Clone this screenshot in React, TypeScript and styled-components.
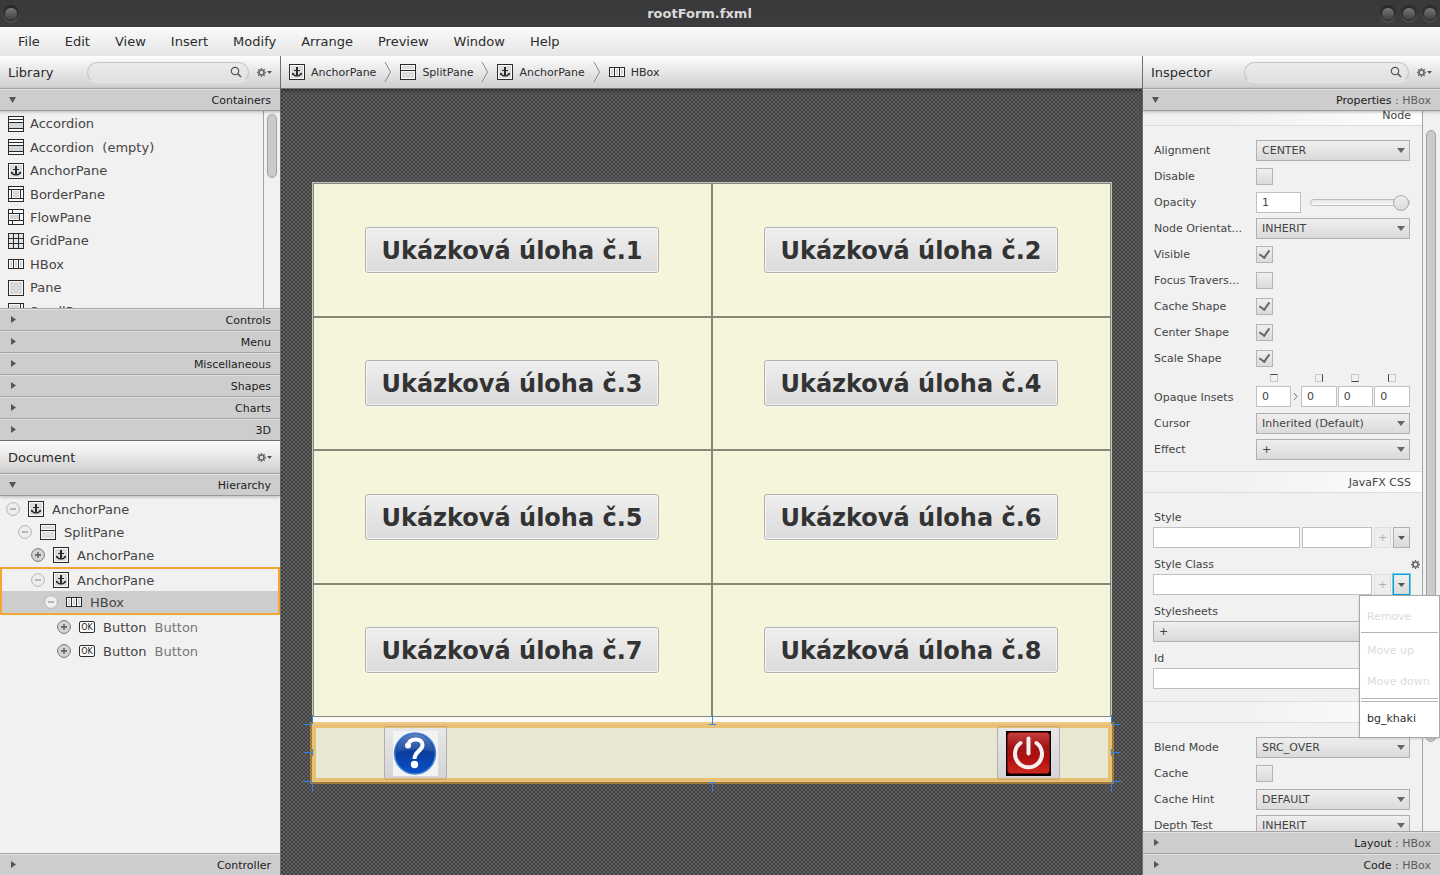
import React from "react";
import styled, { createGlobalStyle, css } from "styled-components";

const GlobalStyle = createGlobalStyle`
  * { box-sizing: border-box; }
  body { margin: 0; }
  body, button, input, select {
    font-family: "DejaVu Sans", Verdana, sans-serif;
    color: #444;
  }
  button { border: 0; background: none; padding: 0; margin: 0; }
  ul { list-style: none; margin: 0; padding: 0; }
`;

const line = "#a4a4a4";
const barFill = "linear-gradient(#fdfdfd, #cfcfcf)";
const controlFill = "linear-gradient(#efefef, #dadada)";

/* ---------- window frame ---------- */

const Window = styled.div`
  display: flex;
  flex-direction: column;
  height: 100vh;
  overflow: hidden;
  background: #f1f1f1;
  font-size: 13px;
`;

const TitleBar = styled.header`
  display: flex;
  align-items: center;
  gap: 3px;
  height: 27px;
  flex: none;
  padding: 0 1px 0 2px;
  background: linear-gradient(#39393b, #3c3c3e);
`;

const Title = styled.h1`
  flex: 1;
  margin: 0;
  text-align: center;
  font-size: 13px;
  font-weight: 700;
  color: #dadada;
`;

const WindowButton = styled.button`
  width: 18px;
  height: 18px;
  border-radius: 50%;
  background: linear-gradient(#262627, #505052);
  display: grid;
  place-items: center;
  &::before {
    content: "";
    width: 12px;
    height: 12px;
    border-radius: 50%;
    background: linear-gradient(#787878, #3e3e40);
    border: 1px solid #2c2c2d;
  }
`;

const MenuBar = styled.nav`
  display: flex;
  flex: none;
  height: 29px;
  padding-left: 5px;
  background: linear-gradient(#fafafa, #e6e6e6);
`;

const MenuButton = styled.button`
  padding: 0 12px 0 13px;
  font-size: 13px;
  color: #2c2c2c;
`;

const Body = styled.div`
  display: flex;
  flex: 1;
  min-height: 0;
`;

const Side = styled.aside<{ $right?: boolean }>`
  display: flex;
  flex-direction: column;
  flex: none;
  width: ${(p) => (p.$right ? "298px" : "281px")};
  border: 0 solid #6e6e6e;
  ${(p) => (p.$right ? "border-left-width: 1px;" : "border-right-width: 1px;")}
`;

const PanelBar = styled.div`
  display: flex;
  align-items: center;
  flex: none;
  height: 32px;
  padding: 0 8px;
  background: ${barFill};
`;

const PanelTitle = styled.h2`
  flex: 1;
  margin: 0;
  font-size: 13px;
  font-weight: 400;
  color: #2c2c2c;
`;

const SearchBox = styled.label<{ $width: number }>`
  display: flex;
  align-items: center;
  width: ${(p) => p.$width}px;
  height: 21px;
  margin-right: 8px;
  padding: 0 6px 0 10px;
  border: 1px solid #c4c4c4;
  border-bottom-color: #e8e8e8;
  border-radius: 11px;
  background: linear-gradient(#ececec, #dfdfdf);
  input {
    flex: 1;
    min-width: 0;
    border: 0;
    outline: 0;
    background: none;
    font-size: 11px;
  }
`;

const GearButton = styled.button`
  display: flex;
  align-items: center;
  gap: 1px;
`;

const SectionButton = styled.button<{ $open?: boolean }>`
  position: relative;
  z-index: 1;
  display: flex;
  align-items: center;
  flex: none;
  width: 100%;
  height: ${(p) => (p.$open ? 23 : 22)}px;
  padding: 1px 9px 0;
  border-top: 1px solid ${line};
  background: #cdcdcd;
  box-shadow: inset 0 1px #e2e2e2;
  font-size: 11px;
  color: #1c1c1c;
  ${(p) =>
    p.$open &&
    css`
      border-bottom: 1px solid #9a9a9a;
      box-shadow: inset 0 1px #e2e2e2, 0 1px 3px rgba(0, 0, 0, 0.25);
    `}
`;

const SectionName = styled.span`
  flex: 1;
  text-align: right;
  small {
    font-size: 11px;
    color: #5c5c5c;
  }
`;

/* ---------- library and hierarchy ---------- */

const LibraryArea = styled.div`
  display: flex;
  flex: none;
  height: 197px;
  overflow: hidden;
`;

const LibraryList = styled.ul`
  display: grid;
  flex: 1;
  height: 212px;
  grid-template-rows: repeat(9, 1fr);
  padding: 1px 0 0 8px;
`;

const LibraryItem = styled.li`
  display: flex;
  align-items: center;
  gap: 6px;
  white-space: pre;
`;

const ScrollTrack = styled.div<{ $top: number; $width: number }>`
  flex: none;
  width: ${(p) => p.$width}px;
  padding: ${(p) => p.$top}px 3px 0;
  border-left: 1px solid ${line};
`;

const ScrollThumb = styled.div<{ $length: string }>`
  width: 10px;
  height: ${(p) => p.$length};
  border: 1px solid #a2a2a2;
  border-radius: 5px;
  background: #cbcbcb;
`;

const DocumentPanel = styled.section`
  display: flex;
  flex-direction: column;
  flex: 1;
  min-height: 0;
  border-top: 1px solid #6e6e6e;
`;

const Tree = styled.ul`
  flex: 1;
  min-height: 0;
  overflow: hidden;
  padding-top: 1px;
`;

const TreeRow = styled.li<{ $indent: number; $short?: boolean; $selected?: boolean }>`
  display: flex;
  align-items: center;
  gap: 8px;
  height: ${(p) => (p.$short ? 22 : 24)}px;
  padding-left: ${(p) => p.$indent}px;
  background: ${(p) => (p.$selected ? "#cdcdcd" : "transparent")};
  em {
    font-style: normal;
    color: #777;
  }
`;

const DropTarget = styled.ul`
  border: 2px solid #f0a733;
`;

const Toggle = styled.button`
  display: flex;
`;

/* ---------- centre ---------- */

const Workspace = styled.main`
  display: flex;
  flex-direction: column;
  flex: 1;
  min-width: 0;
`;

const Crumbs = styled.nav`
  display: flex;
  align-items: center;
  flex: none;
  gap: 8px;
  height: 33px;
  padding-left: 8px;
  border-bottom: 1px solid #777;
  background: ${barFill};
`;

const Crumb = styled.a`
  display: flex;
  align-items: center;
  gap: 6px;
  font-size: 11px;
  color: #2c2c2c;
  text-decoration: none;
`;

const Canvas = styled.div`
  display: grid;
  place-items: center;
  flex: 1;
  min-height: 0;
  background: repeating-conic-gradient(#424242 0 25%, #606060 0 50%) 0 0 / 4px 4px;
  box-shadow: inset 0 3px 4px -2px rgba(0, 0, 0, 0.5);
`;

const Scene = styled.div`
  display: flex;
  flex-direction: column;
  width: 800px;
  height: 600px;
  border: 1px solid #c4c4c4;
  border-bottom: 0;
  background: #fafafa;
`;

const TaskGrid = styled.div`
  display: grid;
  flex: 1;
  grid-template: repeat(4, 1fr) / 1fr 1fr;
  margin-bottom: 7px;
`;

const TaskCell = styled.div`
  display: grid;
  place-items: center;
  border: 1px solid #888878;
  background: #f5f5dc;
`;

const TaskButton = styled.button`
  height: 46px;
  padding: 2px 15px 0;
  border: 1px solid #b2b2b2;
  border-radius: 3px;
  background: ${controlFill};
  box-shadow: inset 0 0 0 1px #f4f4f4, 0 1px #fbfbf0;
  font-size: 24px;
  font-weight: 700;
  color: #333;
`;

const BottomBox = styled.div`
  position: relative;
  display: flex;
  align-items: center;
  justify-content: space-between;
  height: 58px;
  margin: 0 -1px;
  padding: 0 52px 0 72px;
  background: #e8e8d2;
  &::after {
    content: "";
    position: absolute;
    inset: -2px;
    border: 6px solid rgba(228, 158, 40, 0.55);
    pointer-events: none;
  }
`;

const ImageButton = styled.button`
  display: grid;
  place-items: center;
  width: 63px;
  height: 54px;
  border: 1px solid #b0b0b0;
  border-radius: 3px;
  background: linear-gradient(#e8e8e8, #d4d4d8);
`;

const Handles = styled.svg`
  position: absolute;
  left: -10px;
  top: -10px;
  z-index: 1;
  pointer-events: none;
`;

/* ---------- inspector ---------- */

const InspectorArea = styled.div`
  display: flex;
  flex: 1;
  min-height: 0;
  overflow: hidden;
`;

const Properties = styled.form`
  flex: 1;
  min-width: 0;
  height: 0;
  margin-top: -7px;
  font-size: 11px;
`;

const GroupTitle = styled.h3`
  display: flex;
  align-items: center;
  justify-content: flex-end;
  height: 22px;
  margin: 0;
  padding: 1px 11px 0 0;
  border: 1px solid #dcdcdc;
  border-width: 1px 0;
  background: linear-gradient(90deg, #f1f1f1 30%, #fdfdfd);
  font-size: 11px;
  font-weight: 400;
`;

const Group = styled.div`
  padding: 11px 12px 9px 10px;
`;

const PropertyRow = styled.div<{ $tall?: boolean }>`
  display: grid;
  grid-template-columns: 103px 1fr;
  align-items: ${(p) => (p.$tall ? "end" : "center")};
  height: ${(p) => (p.$tall ? 39 : 26)}px;
  padding: 2px 0 3px;
  label {
    align-self: ${(p) => (p.$tall ? "end" : "start")};
    padding: ${(p) => (p.$tall ? 0 : 1)}px 0 0 1px;
    line-height: ${(p) => (p.$tall ? 19 : 21)}px;
    white-space: nowrap;
  }
`;

const SelectBox = styled.span`
  position: relative;
  display: block;
  &::after {
    content: "";
    position: absolute;
    right: 5px;
    top: 8px;
    border: 4px solid transparent;
    border-top: 5px solid #666;
    border-bottom: 0;
    pointer-events: none;
  }
  select {
    appearance: none;
    display: block;
    width: 100%;
    height: 21px;
    padding: 0 5px;
    border: 1px solid #b0b0b0;
    border-radius: 0;
    background: ${controlFill};
    font-size: 11px;
  }
`;

const Check = styled.input`
  appearance: none;
  width: 17px;
  height: 17px;
  margin: 0;
  border: 1px solid #b4b4b4;
  background: ${controlFill};
  display: grid;
  place-items: center;
  &:checked::before {
    content: "";
    width: 5px;
    height: 8px;
    margin-bottom: 2px;
    border: solid #666;
    border-width: 0 2px 2px 0;
    transform: rotate(35deg);
  }
`;

const Field = styled.input`
  width: 100%;
  min-width: 0;
  height: 21px;
  padding: 0 5px;
  border: 1px solid #c0c0c0;
  background: #fff;
  font-size: 11px;
`;

const OpacityControls = styled.div`
  display: grid;
  grid-template-columns: 45px 1fr;
  gap: 9px;
  align-items: center;
`;

const Slider = styled.input`
  appearance: none;
  width: 100%;
  height: 17px;
  margin: 0;
  background: none;
  &::-webkit-slider-runnable-track {
    height: 7px;
    border: 1px solid #bdbdbd;
    border-radius: 4px;
    background: linear-gradient(#e4e4e4, #fafafa);
  }
  &::-webkit-slider-thumb {
    appearance: none;
    width: 16px;
    height: 16px;
    margin-top: -5px;
    border: 1px solid #a8a8a8;
    border-radius: 50%;
    background: ${controlFill};
  }
`;

const InsetControls = styled.div`
  display: grid;
  grid-template-columns: 35px 8px 1fr 1fr 1fr;
  gap: 1px;
  align-items: end;
`;

const InsetCell = styled.div`
  display: grid;
  justify-items: center;
  gap: 4px;
`;

const InsetMark = styled.i<{ $edge: "top" | "right" | "bottom" | "left" }>`
  width: 8px;
  height: 8px;
  border: 1px solid #c8c8c8;
  border-${(p) => p.$edge}-color: #444;
`;

const InsetArrow = styled.svg`
  margin-bottom: 6px;
`;

const StackRow = styled.div`
  height: 47px;
`;

const StackLabel = styled.div`
  display: flex;
  align-items: center;
  justify-content: space-between;
  height: 23px;
  padding: 4px 0 0 1px;
  margin-right: -10px;
`;

const StackControls = styled.div<{ $columns: string }>`
  display: grid;
  grid-template-columns: ${(p) => p.$columns};
  column-gap: 2px;
`;

const SmallButton = styled.button<{ $focused?: boolean }>`
  display: grid;
  place-items: center;
  height: 21px;
  border: 1px solid #b0b0b0;
  background: ${controlFill};
  font-size: 11px;
  &:disabled {
    border-color: #dedede;
    background: #eeeeee;
    color: #b0b0b0;
  }
  ${(p) =>
    p.$focused &&
    css`
      border-color: #039ed3;
      box-shadow: 0 0 0 1px rgba(3, 158, 211, 0.5);
    `}
`;

const MenuAnchor = styled.div`
  position: relative;
  display: grid;
`;

const Popup = styled.ul`
  position: absolute;
  z-index: 2;
  top: 21px;
  right: -30px;
  width: 81px;
  height: 143px;
  padding: 5px 1px 0;
  border: 1px solid #a8a8a8;
  background: #fff;
  box-shadow: 0 1px 2px rgba(0, 0, 0, 0.15);
`;

const PopupItem = styled.li`
  button {
    display: block;
    height: 31px;
    padding-left: 6px;
    font-size: 11px;
    color: #2c2c2c;
  }
  button:disabled {
    color: #dcdcdc;
  }
`;

const PopupRule = styled.li<{ $double?: boolean }>`
  height: ${(p) => (p.$double ? 4 : 1)}px;
  border-top: 1px solid #b4b4b4;
  border-bottom: ${(p) => (p.$double ? "1px solid #b4b4b4" : "0")};
  margin: ${(p) => (p.$double ? "1px 0" : "0 0 2px")};
`;

/* ---------- icons ---------- */

type IconName =
  | "accordion" | "anchor" | "border" | "flow" | "grid" | "hbox" | "pane" | "scroll" | "split" | "ok";

const Icon = ({ name }: { name: IconName }) => {
  const frame = <rect x=".5" y=".5" width="15" height="15" fill="#fafafa" stroke="#2a2a2a" />;
  const shapes: Record<IconName, React.ReactNode> = {
    accordion: (
      <>
        {frame}
        <rect x="1" y="7" width="14" height="5" fill="#d6d6d6" />
        <path d="M1 3.5h14M1 6.5h14M1 12.5h14" stroke="#2a2a2a" />
      </>
    ),
    anchor: (
      <>
        {frame}
        <rect x="2" y="2" width="12" height="12" fill="#dcdcdc" />
        <path d="M7 3h2v9H7z" fill="#2a2a2a" />
        <path d="M5 6.500h6" stroke="#2a2a2a" />
        <path d="M4 9.500c.6 1.800 2 2.500 4 2.500s3.400-.7 4-2.500" fill="none" stroke="#2a2a2a" strokeWidth="1.200" />
        <path d="M3 11V8.500l2.500 1.500zM13 11V8.500L10.500 10z" fill="#2a2a2a" />
      </>
    ),
    border: (
      <>
        {frame}
        <path d="M1 3.500h14M1 12.500h14M3.500 4v8M12.500 4v8" stroke="#2a2a2a" />
        <rect x="5" y="5" width="6" height="6" fill="#d6d6d6" />
      </>
    ),
    flow: (
      <>
        {frame}
        <rect x="2" y="6" width="9" height="4" fill="#d0d0d0" />
        <path d="M1 4.500h14M1 11.500h14M4.500 1v3M11.500 5v6M4.500 12v3" stroke="#2a2a2a" />
      </>
    ),
    grid: (
      <>
        <rect x=".5" y=".5" width="15" height="15" fill="#e4e4e4" stroke="#2a2a2a" />
        <path d="M1 5.500h14M1 10.500h14M5.500 1v14M10.500 1v14" stroke="#2a2a2a" />
      </>
    ),
    hbox: (
      <>
        <rect x=".5" y="3.500" width="15" height="9" fill="#fafafa" stroke="#2a2a2a" />
        <path d="M3 5v6M8 5v6M13 5v6" stroke="#d6d6d6" strokeWidth="2" />
        <path d="M5.500 4v8M10.500 4v8" stroke="#2a2a2a" />
      </>
    ),
    pane: (
      <>
        {frame}
        <rect x="2" y="2" width="12" height="12" fill="#d8d8d8" />
      </>
    ),
    scroll: (
      <>
        {frame}
        <rect x="2" y="2" width="9" height="9" fill="#d8d8d8" />
        <path d="M12.500 1v14M1 12.500h12" stroke="#2a2a2a" />
      </>
    ),
    split: (
      <>
        {frame}
        <path d="M2 3.500h12" stroke="#dcdcdc" strokeWidth="3" />
        <rect x="2" y="8" width="12" height="6" fill="#dcdcdc" />
        <path d="M1 6.500h14" stroke="#2a2a2a" />
      </>
    ),
    ok: (
      <>
        <rect x=".5" y="2.500" width="15" height="11" rx="1.500" fill="#fff" stroke="#2a2a2a" />
        <text x="8" y="11" textAnchor="middle" fontSize="8" fontFamily="DejaVu Sans" fill="#222">OK</text>
      </>
    ),
  };
  return (
    <svg width="16" height="16" aria-hidden="true">
      {shapes[name]}
    </svg>
  );
};

const ToggleIcon = ({ open }: { open?: boolean }) => (
  <svg width="14" height="14" aria-hidden="true">
    <circle cx="7" cy="7" r="6.400" fill={open ? "#eeeeee" : "#d4d4d4"} stroke={open ? "#b4b4b4" : "#777"} />
    <path d={open ? "M4 7h6" : "M4 7h6M7 4v6"} stroke={open ? "#999" : "#555"} strokeWidth="1.300" />
  </svg>
);

const Triangle = ({ down }: { down?: boolean }) => (
  <svg width="8" height="8" aria-hidden="true">
    <path d={down ? "M0 1h7l-3.500 6z" : "M2 0v7l5-3.500z"} fill="#555" />
  </svg>
);

const CaretDown = ({ small }: { small?: boolean }) => (
  <svg width={small ? 5 : 7} height={small ? 3 : 4} viewBox="0 0 7 4" aria-hidden="true">
    <path d="M0 0h7L3.500 4z" fill="#555" />
  </svg>
);

const Gear = () => (
  <svg width="9" height="9" viewBox="0 0 9 9" aria-hidden="true">
    <circle cx="4.500" cy="4.500" r="2.500" fill="none" stroke="#666" strokeWidth="1.600" />
    <path d="M4.500 0v1.500M4.500 7.500V9M0 4.500h1.500M7.500 4.500H9M1.300 1.300l1 1M6.700 6.700l1 1M7.700 1.300l-1 1M2.300 6.700l-1 1" stroke="#666" strokeWidth="1.400" />
  </svg>
);

const SearchIcon = () => (
  <svg width="12" height="12" aria-hidden="true">
    <circle cx="5" cy="5" r="3.700" fill="none" stroke="#555" strokeWidth="1.200" />
    <path d="M7.800 7.800L11 11" stroke="#555" strokeWidth="1.600" />
  </svg>
);

const CrumbArrow = () => (
  <svg width="8" height="20" aria-hidden="true">
    <path d="M1 0l5.500 10L1 20" fill="none" stroke="#888" />
  </svg>
);

const HelpPicture = () => (
  <svg width="45" height="45" aria-hidden="true">
    <defs>
      <linearGradient id="helpFill" x1="0" y1="0" x2="0" y2="1">
        <stop offset="0" stopColor="#1c3f8f" />
        <stop offset=".45" stopColor="#0c3c9c" />
        <stop offset="1" stopColor="#0a50c8" />
      </linearGradient>
      <linearGradient id="helpShine" x1="0" y1="0" x2="0" y2="1">
        <stop offset="0" stopColor="#8fb0e0" stopOpacity=".6" />
        <stop offset="1" stopColor="#5f8ad0" stopOpacity=".2" />
      </linearGradient>
    </defs>
    <rect width="45" height="45" fill="#f2f3f3" />
    <circle cx="22" cy="22.500" r="20.500" fill="url(#helpFill)" stroke="#3f86d8" strokeWidth="1.500" />
    <path d="M3 22a19 19 0 0 1 38 0c-8-4-26-5-38 0z" fill="url(#helpShine)" />
    <path d="M15 14c1-4.500 4.500-5.500 8-5.500 4 0 6.500 2.200 6.500 5.500 0 6-8 6-8 14" fill="none" stroke="#fff" strokeWidth="4" />
    <circle cx="15" cy="14.500" r="3" fill="#fff" />
    <circle cx="21.500" cy="33.500" r="3.700" fill="#fff" />
  </svg>
);

const PowerPicture = () => (
  <svg width="45" height="45" aria-hidden="true">
    <defs>
      <linearGradient id="powerFill" x1="0" y1="0" x2="0" y2="1">
        <stop offset="0" stopColor="#c84040" />
        <stop offset=".35" stopColor="#a01414" />
        <stop offset=".65" stopColor="#b01010" />
        <stop offset="1" stopColor="#d02a20" />
      </linearGradient>
    </defs>
    <rect width="45" height="45" fill="#000" />
    <rect x="1.500" y="1.500" width="42" height="41" rx="3" fill="url(#powerFill)" stroke="#7a0c0c" />
    <path d="M14.500 12a13.500 13.500 0 1 0 16 0" fill="none" stroke="#f4f0f0" strokeWidth="4" strokeLinecap="round" />
    <path d="M22.500 7.500v15" stroke="#f4f0f0" strokeWidth="4" strokeLinecap="round" />
  </svg>
);

/* ---------- parts ---------- */

const menus = ["File", "Edit", "View", "Insert", "Modify", "Arrange", "Preview", "Window", "Help"];

const library: [IconName, string][] = [
  ["accordion", "Accordion"],
  ["accordion", "Accordion  (empty)"],
  ["anchor", "AnchorPane"],
  ["border", "BorderPane"],
  ["flow", "FlowPane"],
  ["grid", "GridPane"],
  ["hbox", "HBox"],
  ["pane", "Pane"],
  ["scroll", "ScrollPane"],
];

const crumbs: [IconName, string][] = [
  ["anchor", "AnchorPane"],
  ["split", "SplitPane"],
  ["anchor", "AnchorPane"],
  ["hbox", "HBox"],
];

const Section = ({ name, detail, open }: { name: string; detail?: string; open?: boolean }) => (
  <SectionButton $open={open} aria-expanded={!!open}>
    <Triangle down={open} />
    <SectionName>
      {name}
      {detail && <small> : {detail}</small>}
    </SectionName>
  </SectionButton>
);

const Search = ({ name, width }: { name: string; width: number }) => (
  <SearchBox $width={width}>
    <input type="text" aria-label={name} />
    <SearchIcon />
  </SearchBox>
);

const GearMenu = () => (
  <GearButton aria-label="Options">
    <Gear />
    <CaretDown small />
  </GearButton>
);

type NodeProps = {
  icon: IconName;
  name: string;
  detail?: string;
  indent: number;
  open?: boolean;
  short?: boolean;
  selected?: boolean;
};

const TreeNode = ({ icon, name, detail, indent, open, short, selected }: NodeProps) => (
  <TreeRow $indent={indent} $short={short} $selected={selected}>
    <Toggle aria-label={open ? "Collapse" : "Expand"}>
      <ToggleIcon open={open} />
    </Toggle>
    <Icon name={icon} />
    <span>{name}</span>
    {detail && <em>{detail}</em>}
  </TreeRow>
);

const idOf = (label: string) => label.toLowerCase().replace(/[^a-z]+/g, "-");

const SelectRow = ({ label, value }: { label: string; value: string }) => (
  <PropertyRow>
    <label htmlFor={idOf(label)}>{label}</label>
    <SelectBox>
      <select id={idOf(label)} defaultValue={value}>
        <option>{value}</option>
      </select>
    </SelectBox>
  </PropertyRow>
);

const CheckRow = ({ label, checked }: { label: string; checked?: boolean }) => (
  <PropertyRow>
    <label htmlFor={idOf(label)}>{label}</label>
    <Check type="checkbox" id={idOf(label)} defaultChecked={checked} />
  </PropertyRow>
);

const LeftPanels = () => (
  <Side>
    <PanelBar>
      <PanelTitle>Library</PanelTitle>
      <Search name="Search library" width={162} />
      <GearMenu />
    </PanelBar>
    <Section name="Containers" open />
    <LibraryArea>
      <LibraryList>
        {library.map(([icon, name]) => (
          <LibraryItem key={name}>
            <Icon name={icon} />
            {name}
          </LibraryItem>
        ))}
      </LibraryList>
      <ScrollTrack $top={3} $width={17}>
        <ScrollThumb $length="64px" />
      </ScrollTrack>
    </LibraryArea>
    {["Controls", "Menu", "Miscellaneous", "Shapes", "Charts", "3D"].map((name) => (
      <Section key={name} name={name} />
    ))}
    <DocumentPanel>
      <PanelBar>
        <PanelTitle>Document</PanelTitle>
        <GearMenu />
      </PanelBar>
      <Section name="Hierarchy" open />
      <Tree>
        <TreeNode icon="anchor" name="AnchorPane" indent={6} open />
        <TreeNode icon="split" name="SplitPane" indent={18} open short />
        <TreeNode icon="anchor" name="AnchorPane" indent={31} />
        <li>
          <DropTarget>
            <TreeNode icon="anchor" name="AnchorPane" indent={29} open short />
            <TreeNode icon="hbox" name="HBox" indent={42} open short selected />
          </DropTarget>
        </li>
        <TreeNode icon="ok" name="Button" detail="Button" indent={57} />
        <TreeNode icon="ok" name="Button" detail="Button" indent={57} />
      </Tree>
      <Section name="Controller" />
    </DocumentPanel>
  </Side>
);

const SceneView = () => (
  <Workspace>
    <Crumbs aria-label="Selection path">
      {crumbs.map(([icon, name], i) => (
        <React.Fragment key={i}>
          {i > 0 && <CrumbArrow />}
          <Crumb href="#">
            <Icon name={icon} />
            {name}
          </Crumb>
        </React.Fragment>
      ))}
    </Crumbs>
    <Canvas>
      <Scene>
        <TaskGrid>
          {[1, 2, 3, 4, 5, 6, 7, 8].map((n) => (
            <TaskCell key={n}>
              <TaskButton>Ukázková úloha č.{n}</TaskButton>
            </TaskCell>
          ))}
        </TaskGrid>
        <BottomBox>
          <ImageButton aria-label="Help">
            <HelpPicture />
          </ImageButton>
          <ImageButton aria-label="Exit">
            <PowerPicture />
          </ImageButton>
          <Handles width="820" height="80" aria-hidden="true">
            <path
              d="M1 10.500h9M10.500 1v9M1 38.500h9M10.500 35v7M1 67.500h9M10.500 68v9M410.500 1v9M407 10.500h7M410.500 69v8M407 68.500h7M810 10.500h9M809.500 1v9M810 38.500h9M809.500 35v7M810 67.500h9M809.500 68v9"
              stroke="#2a86ee"
              fill="none"
            />
          </Handles>
        </BottomBox>
      </Scene>
    </Canvas>
  </Workspace>
);

const Inspector = () => (
  <Side $right>
    <PanelBar>
      <PanelTitle>Inspector</PanelTitle>
      <Search name="Search properties" width={165} />
      <GearMenu />
    </PanelBar>
    <Section name="Properties" detail="HBox" open />
    <InspectorArea>
      <Properties>
        <GroupTitle>Node</GroupTitle>
        <Group>
          <SelectRow label="Alignment" value="CENTER" />
          <CheckRow label="Disable" />
          <PropertyRow>
            <label htmlFor="opacity">Opacity</label>
            <OpacityControls>
              <Field id="opacity" type="text" defaultValue="1" />
              <Slider type="range" aria-label="Opacity" min="0" max="1" step="0.1" defaultValue="1" />
            </OpacityControls>
          </PropertyRow>
          <SelectRow label="Node Orientat..." value="INHERIT" />
          <CheckRow label="Visible" checked />
          <CheckRow label="Focus Travers..." />
          <CheckRow label="Cache Shape" checked />
          <CheckRow label="Center Shape" checked />
          <CheckRow label="Scale Shape" checked />
          <PropertyRow $tall>
            <label htmlFor="inset-top">Opaque Insets</label>
            <InsetControls>
              <InsetCell>
                <InsetMark $edge="top" />
                <Field id="inset-top" type="text" defaultValue="0" />
              </InsetCell>
              <InsetArrow width="8" height="9" aria-hidden="true">
                <path d="M2 1l3 3.500L2 8" fill="none" stroke="#777" />
              </InsetArrow>
              {(["right", "bottom", "left"] as const).map((edge) => (
                <InsetCell key={edge}>
                  <InsetMark $edge={edge} />
                  <Field type="text" aria-label={`Inset ${edge}`} defaultValue="0" />
                </InsetCell>
              ))}
            </InsetControls>
          </PropertyRow>
          <SelectRow label="Cursor" value="Inherited (Default)" />
          <SelectRow label="Effect" value="+" />
        </Group>
        <GroupTitle>JavaFX CSS</GroupTitle>
        <Group>
          <StackRow>
            <StackLabel>
              <label htmlFor="style">Style</label>
            </StackLabel>
            <StackControls $columns="1fr 70px 17px 17px">
              <Field id="style" type="text" />
              <Field type="text" aria-label="Style value" />
              <SmallButton type="button" disabled>+</SmallButton>
              <SmallButton type="button" aria-label="Style actions">
                <CaretDown />
              </SmallButton>
            </StackControls>
          </StackRow>
          <StackRow>
            <StackLabel>
              <label htmlFor="style-class">Style Class</label>
              <Gear />
            </StackLabel>
            <StackControls $columns="1fr 17px 17px">
              <Field id="style-class" type="text" />
              <SmallButton type="button" disabled>+</SmallButton>
              <MenuAnchor>
                <SmallButton type="button" aria-label="Style class actions" $focused>
                  <CaretDown />
                </SmallButton>
                <Popup>
                  <PopupItem><button type="button" disabled>Remove</button></PopupItem>
                  <PopupRule />
                  <PopupItem><button type="button" disabled>Move up</button></PopupItem>
                  <PopupItem><button type="button" disabled>Move down</button></PopupItem>
                  <PopupRule $double />
                  <PopupItem><button type="button">bg_khaki</button></PopupItem>
                </Popup>
              </MenuAnchor>
            </StackControls>
          </StackRow>
          <StackRow>
            <StackLabel>
              <label htmlFor="stylesheets">Stylesheets</label>
            </StackLabel>
            <SelectBox>
              <select id="stylesheets" defaultValue="+">
                <option>+</option>
              </select>
            </SelectBox>
          </StackRow>
          <StackRow>
            <StackLabel>
              <label htmlFor="node-id">Id</label>
            </StackLabel>
            <Field id="node-id" type="text" />
          </StackRow>
        </Group>
        <GroupTitle />
        <Group>
          <SelectRow label="Blend Mode" value="SRC_OVER" />
          <CheckRow label="Cache" />
          <SelectRow label="Cache Hint" value="DEFAULT" />
          <SelectRow label="Depth Test" value="INHERIT" />
        </Group>
      </Properties>
      <ScrollTrack $top={19} $width={18}>
        <ScrollThumb $length="612px" />
      </ScrollTrack>
    </InspectorArea>
    <Section name="Layout" detail="HBox" />
    <Section name="Code" detail="HBox" />
  </Side>
);

export default function App() {
  return (
    <>
      <GlobalStyle />
      <Window>
        <TitleBar>
          <WindowButton aria-label="Window menu" />
          <Title>rootForm.fxml</Title>
          <WindowButton aria-label="Minimize" />
          <WindowButton aria-label="Maximize" />
          <WindowButton aria-label="Close" />
        </TitleBar>
        <MenuBar>
          {menus.map((name) => (
            <MenuButton key={name}>{name}</MenuButton>
          ))}
        </MenuBar>
        <Body>
          <LeftPanels />
          <SceneView />
          <Inspector />
        </Body>
      </Window>
    </>
  );
}
